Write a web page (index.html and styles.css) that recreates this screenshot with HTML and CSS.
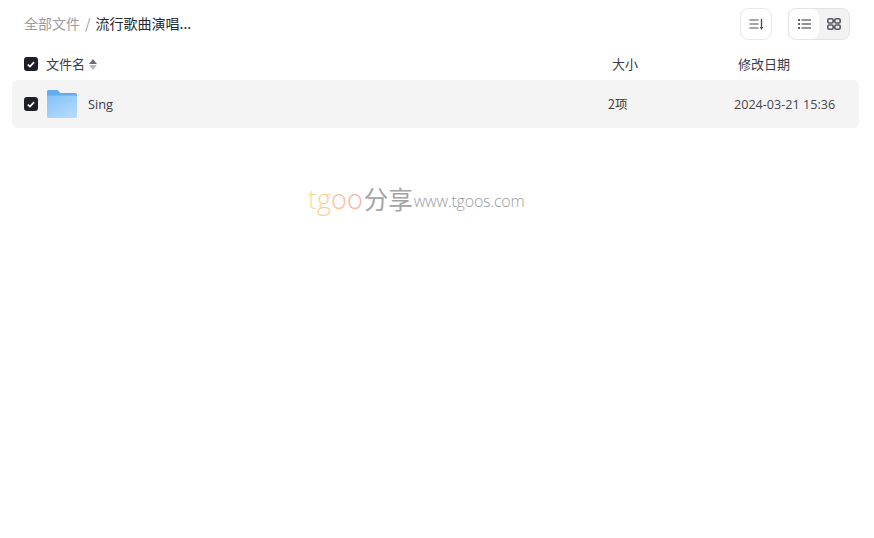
FILE: index.html
```html
<!DOCTYPE html>
<html lang="zh-CN">
<head>
    <meta charset="UTF-8">
    <meta name="viewport" content="width=device-width, initial-scale=1.0">
    <title>全部文件</title>
    <link rel="stylesheet" href="styles.css">
</head>
<body>
    <div class="toolbar">
        <div class="crumbs">
            <span class="crumb-root">全部文件</span>
            <span class="crumb-sep">/</span>
            <span class="crumb-current">流行歌曲演唱...</span>
        </div>
        <div class="tools">
            <button class="btn-sort">
                <svg width="15" height="13" viewBox="0 0 15 13">
                    <path d="M0.500 2h9M0.500 6h9M0.500 10h9" stroke="#4a4a55" stroke-width="1.2" fill="none"/>
                    <path d="M12.500 1v9" stroke="#4a4a55" stroke-width="1.3" fill="none"/>
                    <path d="M10.800 9h3.400l-1.700 3z" fill="#4a4a55"/>
                </svg>
            </button>
            <div class="view-switch">
                <div class="view-btn active">
                    <svg width="13" height="10" viewBox="0 0 13 10">
                        <path d="M0 1h2M0 5h2M0 9h2" stroke="#2b2b36" stroke-width="1.3" fill="none"/>
                        <path d="M3.500 1h9.500M3.500 5h9.500M3.500 9h9.500" stroke="#2b2b36" stroke-width="1.1" fill="none"/>
                    </svg>
                </div>
                <div class="view-btn">
                    <svg width="14" height="12" viewBox="0 0 14 12">
                        <rect x="0.800" y="0.800" width="5.400" height="4.200" rx="1.500" stroke="#55555e" stroke-width="1.600" fill="none"/>
                        <rect x="7.800" y="0.800" width="5.400" height="4.200" rx="1.500" stroke="#55555e" stroke-width="1.600" fill="none"/>
                        <rect x="0.800" y="7" width="5.400" height="4.200" rx="1.500" stroke="#55555e" stroke-width="1.600" fill="none"/>
                        <rect x="7.800" y="7" width="5.400" height="4.200" rx="1.500" stroke="#55555e" stroke-width="1.600" fill="none"/>
                    </svg>
                </div>
            </div>
        </div>
    </div>

    <div class="list-head">
        <span class="check">
            <svg width="8" height="7" viewBox="0 0 8 7"><path d="M0.800 3.500l2.100 2 4.200-4.400" stroke="#fff" stroke-width="1.700" fill="none"/></svg>
        </span>
        <div class="col-name">
            <span class="col-label">文件名</span>
            <span class="sort-arrows"><i class="arrow-up"></i><i class="arrow-down"></i></span>
        </div>
        <div class="col-size col-label">大小</div>
        <div class="col-date col-label">修改日期</div>
    </div>

    <div class="file-row">
        <span class="check">
            <svg width="8" height="7" viewBox="0 0 8 7"><path d="M0.800 3.500l2.100 2 4.200-4.400" stroke="#fff" stroke-width="1.700" fill="none"/></svg>
        </span>
        <svg class="folder" width="30" height="28" viewBox="0 0 30 28">
            <defs>
                <linearGradient id="folderFill" x1="0" y1="0" x2="0.600" y2="1">
                    <stop offset="0" stop-color="#84c2f8"/>
                    <stop offset="1" stop-color="#b0d9fd"/>
                </linearGradient>
            </defs>
            <path d="M0 1.500a1.500 1.500 0 0 1 1.500-1.500h9l3 3h14.500a2 2 0 0 1 2 2v3h-30z" fill="#62acf0"/>
            <path d="M0 5.500h28a2 2 0 0 1 2 2v18.500a2 2 0 0 1-2 2h-26.500a1.500 1.500 0 0 1-1.500-1.500z" fill="url(#folderFill)"/>
            <rect x="22" y="10" width="3" height="1" fill="#92c8f6"/>
        </svg>
        <span class="file-name">Sing</span>
        <span class="file-size">2项</span>
        <span class="file-date">2024-03-21 15:36</span>
    </div>

    <div class="watermark">
        <span class="wm-t">t</span><span class="wm-g">g</span><span class="wm-o1">o</span><span class="wm-o2">o</span><span class="wm-cn">分享</span>
        <span class="wm-url">www.tgoos.com</span>
    </div>
</body>
</html>
```

FILE: styles.css
```css
body {
    margin: 0;
    background: #fff;
    font-family: "Noto Sans CJK SC", "Open Sans", sans-serif;
    font-size: 13px;
    color: #3a3a48;
    overflow: hidden;
}
.toolbar {
    display: flex;
    justify-content: space-between;
    align-items: center;
    height: 32px;
    padding: 8px 24px 0 24px;
}
.crumbs {
    display: flex;
    align-items: center;
    gap: 5px;
    margin-top: -2px;
    font-size: 14px;
}
.crumb-root { color: #9b9ba3; }
.crumb-sep { color: #9b9ba3; }
.crumb-current { color: #25262e; }
.tools {
    display: flex;
    gap: 16px;
}
.btn-sort {
    display: flex;
    align-items: center;
    justify-content: center;
    width: 32px;
    height: 32px;
    padding: 0;
    background: #fff;
    border: 1px solid #e8e8ea;
    border-radius: 8px;
}
.view-switch {
    display: flex;
    width: 62px;
    height: 32px;
    box-sizing: border-box;
    background: #f2f2f3;
    border: 1px solid #e3e3e5;
    border-radius: 8px;
    overflow: hidden;
}
.view-btn {
    display: flex;
    align-items: center;
    justify-content: center;
    flex: 1;
}
.view-btn.active {
    background: #fff;
    border-radius: 8px;
}
.list-head {
    display: flex;
    align-items: center;
    height: 32px;
    padding: 8px 0 0 24px;
}
.col-label { margin-top: -2px; }
.check {
    display: flex;
    align-items: center;
    justify-content: center;
    flex: none;
    width: 14px;
    height: 14px;
    background: #1f2027;
    border-radius: 3px;
}
.col-name {
    display: flex;
    align-items: center;
    gap: 4px;
    width: 566px;
    margin-left: 8px;
}
.sort-arrows {
    display: flex;
    flex-direction: column;
    gap: 1px;
}
.arrow-up {
    border: 4px solid transparent;
    border-top: 0;
    border-bottom: 5px solid #6d6d75;
}
.arrow-down {
    border: 4px solid transparent;
    border-bottom: 0;
    border-top: 5px solid #b9b9bd;
}
.col-size { width: 126px; }
.file-row {
    display: flex;
    align-items: center;
    height: 48px;
    margin: 0 15px 0 12px;
    padding-left: 12px;
    background: #f4f4f4;
    border-radius: 6px;
}
.folder {
    flex: none;
    margin-left: 9px;
}
.file-name {
    width: 520px;
    margin-left: 11px;
    font-family: "Open Sans", sans-serif;
    font-size: 12.800px;
}
.file-size {
    width: 126px;
    margin-top: -2px;
    font-size: 12.500px;
}
.file-date {
    font-family: "Open Sans", sans-serif;
    font-size: 12.600px;
    color: #44444f;
}
.watermark {
    display: flex;
    align-items: baseline;
    margin: 54px 0 0 308px;
    font-size: 27px;
    line-height: 34px;
    font-family: "Open Sans", sans-serif;
    font-weight: 300;
}
.wm-t { color: #fbdc9c; }
.wm-g { color: #fbd19a; }
.wm-o1 { color: #fcc29d; }
.wm-o2 { color: #fbb5a3; }
.wm-cn {
    margin-left: 1px;
    font-size: 24.500px;
    color: #a4a4a4;
    font-family: "Noto Sans CJK SC", sans-serif;
    font-weight: 400;
}
.wm-url {
    align-self: flex-start;
    margin: 9px 0 0 1px;
    font-size: 16px;
    line-height: 20px;
    letter-spacing: -0.200px;
    color: #9c9c9c;
}
```
